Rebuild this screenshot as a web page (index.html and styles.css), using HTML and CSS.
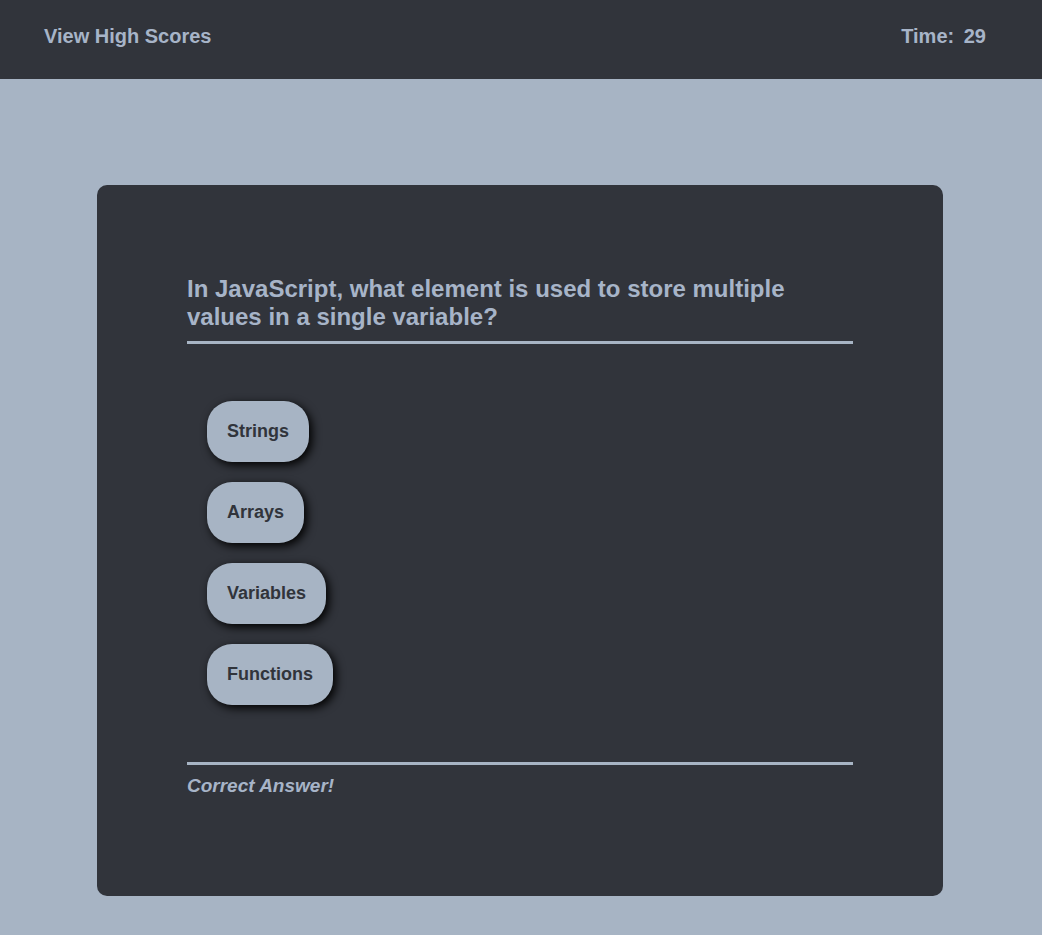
FILE: index.html
```html
<!DOCTYPE html>
<html lang="en">
<head>
<meta charset="utf-8">
<meta name="viewport" content="width=device-width, initial-scale=1">
<title>Code Quiz</title>
<link rel="stylesheet" href="styles.css">
</head>
<body>
<header class="topbar">
  <a class="scores-link" href="#scores">View High Scores</a>
  <p class="timer">Time: <span class="seconds">29</span></p>
</header>
<main class="quiz">
  <h1 class="question">In JavaScript, what element is used to store multiple values in a single variable?</h1>
  <div class="choices">
    <button class="choice" type="button">Strings</button>
    <button class="choice" type="button">Arrays</button>
    <button class="choice" type="button">Variables</button>
    <button class="choice" type="button">Functions</button>
  </div>
  <p class="feedback">Correct Answer!</p>
</main>
</body>
</html>
```

FILE: styles.css
```css
* {
  box-sizing: border-box;
}

body {
  margin: 0;
  background: #a7b4c4;
  color: #a7b4c8;
  font-family: "Liberation Sans", Arial, sans-serif;
  font-weight: bold;
}

.topbar {
  display: flex;
  justify-content: space-between;
  padding: 24px 56px 31px 44px;
  background: #31343b;
  font-size: 20px;
  line-height: 24px;
}

.scores-link {
  color: inherit;
  text-decoration: none;
}

.timer {
  margin: 0;
}

.seconds {
  margin-left: 4px;
}

.quiz {
  margin: 106px 99px 39px 97px;
  padding: 90px;
  border-radius: 10px;
  background: #31343b;
}

.question {
  margin: 0;
  padding-bottom: 10px;
  border-bottom: 3px solid #a7b4c4;
  font-size: 24px;
  line-height: 28px;
}

.choices {
  display: flex;
  flex-direction: column;
  align-items: flex-start;
  gap: 20px;
  padding: 57px 20px;
}

.choice {
  padding: 20px;
  border: 0;
  border-radius: 25px;
  background: #a7b4c4;
  box-shadow: 3px 3px 10px #000;
  color: #31343b;
  font: bold 18px/21px "Liberation Sans", Arial, sans-serif;
}

.feedback {
  margin: 0;
  padding: 10px 0 9px;
  border-top: 3px solid #a7b4c4;
  font-size: 19px;
  font-style: italic;
  line-height: 22px;
}
```
